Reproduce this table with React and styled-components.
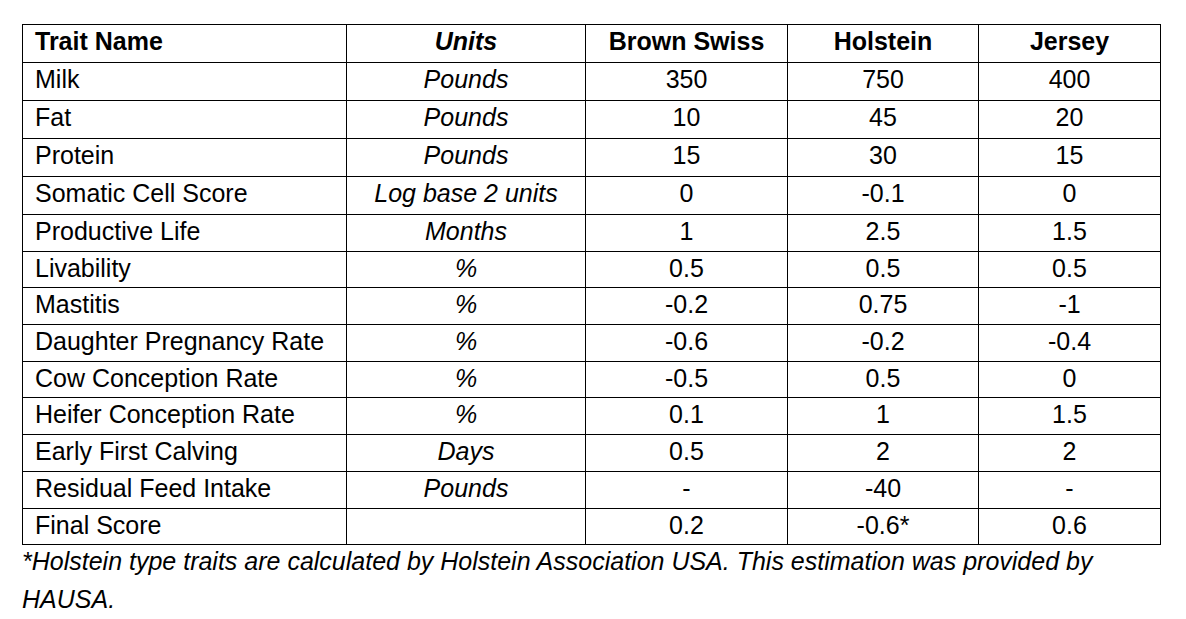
import React from 'react';
import styled, { createGlobalStyle } from 'styled-components';

const GlobalStyle = createGlobalStyle`
  html, body {
    margin: 0;
    padding: 0;
    background: #fff;
  }
  body {
    font-family: 'Liberation Sans', Arial, sans-serif;
    color: #000;
  }
`;

const rows = [
  ['Milk', 'Pounds', '350', '750', '400'],
  ['Fat', 'Pounds', '10', '45', '20'],
  ['Protein', 'Pounds', '15', '30', '15'],
  ['Somatic Cell Score', 'Log base 2 units', '0', '-0.1', '0'],
  ['Productive Life', 'Months', '1', '2.5', '1.5'],
  ['Livability', '%', '0.5', '0.5', '0.5'],
  ['Mastitis', '%', '-0.2', '0.75', '-1'],
  ['Daughter Pregnancy Rate', '%', '-0.6', '-0.2', '-0.4'],
  ['Cow Conception Rate', '%', '-0.5', '0.5', '0'],
  ['Heifer Conception Rate', '%', '0.1', '1', '1.5'],
  ['Early First Calving', 'Days', '0.5', '2', '2'],
  ['Residual Feed Intake', 'Pounds', '-', '-40', '-'],
  ['Final Score', '', '0.2', '-0.6*', '0.6'],
];

export default function App() {
  return (
    <>
      <GlobalStyle />
      <Page>
        <Table>
          <colgroup>
            <col style={{ width: 324 }} />
            <col style={{ width: 239 }} />
            <col style={{ width: 202 }} />
            <col style={{ width: 191 }} />
            <col style={{ width: 182 }} />
          </colgroup>
          <thead>
            <Row $tall>
              <HeadCell>Trait Name</HeadCell>
              <HeadCell $center $italic>Units</HeadCell>
              <HeadCell $center>Brown Swiss</HeadCell>
              <HeadCell $center>Holstein</HeadCell>
              <HeadCell $center>Jersey</HeadCell>
            </Row>
          </thead>
          <tbody>
            {rows.map(([name, unit, bs, hol, jer], i) => (
              <Row key={name} $tall={i < 4}>
                <Cell>{name}</Cell>
                <Cell $center $italic>{unit}</Cell>
                <Cell $center>{bs}</Cell>
                <Cell $center>{hol}</Cell>
                <Cell $center>{jer}</Cell>
              </Row>
            ))}
          </tbody>
        </Table>
        <Footnote>
          *Holstein type traits are calculated by Holstein Association USA. This
          estimation was provided by HAUSA.
        </Footnote>
      </Page>
    </>
  );
}

const Page = styled.div`
  padding: 24px 26px 0 22px;
  width: 1138px;
`;

const Table = styled.table`
  width: 1138px;
  table-layout: fixed;
  border-collapse: separate;
  border-spacing: 0;
  border-top: 1px solid #000;
  border-left: 1px solid #000;
  font-size: 25px;
`;

const Row = styled.tr`
  height: ${props => (props.$tall ? '38px' : '36.7px')};
`;

const Cell = styled.td`
  border-right: 1px solid #000;
  border-bottom: 1px solid #000;
  padding: 0 12px;
  vertical-align: top;
  line-height: 32px;
  text-align: ${props => (props.$center ? 'center' : 'left')};
  font-style: ${props => (props.$italic ? 'italic' : 'normal')};
  white-space: nowrap;
`;

const HeadCell = styled(Cell).attrs({ as: 'th' })`
  font-weight: 700;
`;

const Footnote = styled.p`
  margin: -3px 0 0;
  font-size: 25px;
  font-style: italic;
  line-height: 38px;
`;
